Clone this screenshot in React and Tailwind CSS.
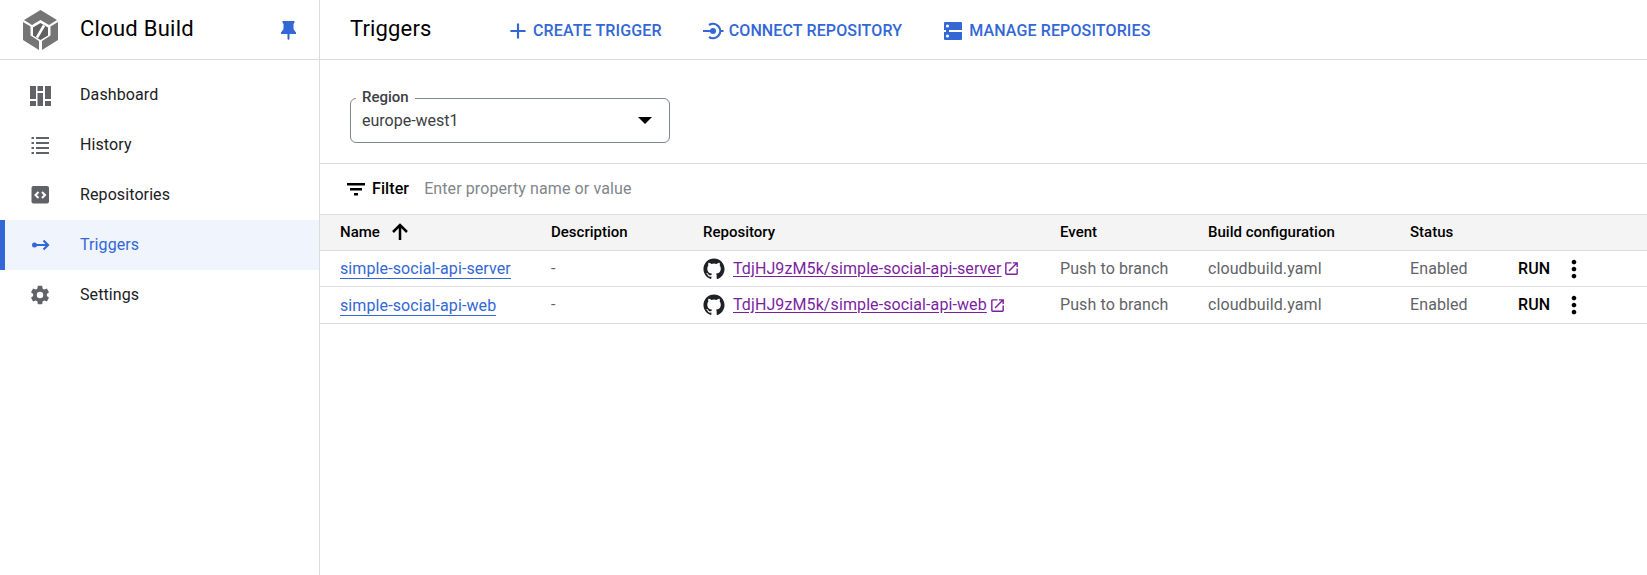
import React from "react";

const Ic = ({ d, className = "", size = 24, fill = "currentColor" }) => (
  <svg width={size} height={size} viewBox="0 0 24 24" fill={fill} className={`shrink-0 ${className}`}>
    <path d={d} />
  </svg>
);

const GH = "M12 .5C5.65.5.5 5.65.5 12c0 5.08 3.29 9.39 7.86 10.91.58.11.79-.25.79-.55v-2.14c-3.2.7-3.87-1.36-3.87-1.36-.52-1.33-1.28-1.68-1.28-1.68-1.04-.71.08-.7.08-.7 1.15.08 1.76 1.19 1.76 1.19 1.03 1.76 2.69 1.25 3.35.96.1-.75.4-1.25.73-1.54-2.55-.29-5.24-1.28-5.24-5.69 0-1.26.45-2.28 1.19-3.09-.12-.29-.52-1.46.11-3.05 0 0 .97-.31 3.17 1.18a11 11 0 0 1 5.77 0c2.2-1.49 3.17-1.18 3.17-1.18.63 1.59.23 2.76.11 3.05.74.81 1.19 1.83 1.19 3.09 0 4.42-2.69 5.39-5.26 5.68.41.36.78 1.06.78 2.14v3.17c0 .31.21.67.8.55C20.22 21.38 23.5 17.08 23.5 12 23.5 5.65 18.35.5 12 .5z";
const EXT = "M19 19H5V5h7V3H5a2 2 0 0 0-2 2v14a2 2 0 0 0 2 2h14a2 2 0 0 0 2-2v-7h-2v7zM14 3v2h3.59l-9.83 9.83 1.41 1.41L19 6.41V10h2V3h-7z";
const MORE = "M12 8c1.1 0 2-.9 2-2s-.9-2-2-2-2 .9-2 2 .9 2 2 2zm0 2c-1.1 0-2 .9-2 2s.9 2 2 2 2-.9 2-2-.9-2-2-2zm0 6c-1.1 0-2 .9-2 2s.9 2 2 2 2-.9 2-2-.9-2-2-2z";

const nav = [
  { label: "Dashboard", icon: <svg width="24" height="24" viewBox="0 0 24 24" fill="#5f6368" className="shrink-0"><path d="M2 3h6v13H2zM2 18h6v5H2zM9.500 3h5.500v5H9.500zM9.500 10h5.500v13H9.500zM17 3h6v13h-6zM17 18h6v5h-6z" /></svg> },
  { label: "History", icon: <svg width="24" height="24" viewBox="0 0 24 24" fill="#5f6368" className="shrink-0"><path d="M3.500 4h2.500v2H3.500zM8 4h13v2H8zM3.500 9h2.500v2H3.500zM8 9h13v2H8zM3.500 14h2.500v2H3.500zM8 14h13v2H8zM3.500 19h2.500v2H3.500zM8 19h13v2H8z" /></svg> },
  { label: "Repositories", icon: <svg width="24" height="24" viewBox="0 0 24 24" className="shrink-0"><rect x="3.500" y="3" width="17.500" height="17.500" rx="2" fill="#5f6368" /><path d="M10.500 9l-3 3 3 3M14 9l3 3-3 3" fill="none" stroke="#fff" strokeWidth="2" /></svg> },
  { label: "Triggers", active: true, icon: <svg width="24" height="24" viewBox="0 0 24 24" className="shrink-0"><circle cx="6.500" cy="12" r="2.500" fill="#3367d6" /><path d="M6.500 12H20M15.500 7.500 20 12l-4.500 4.500" fill="none" stroke="#3367d6" strokeWidth="2.200" /></svg> },
  { label: "Settings", icon: <Ic size={22} className="text-[#5f6368] mx-[1px]" d="M19.43 12.98c.04-.32.07-.64.07-.98s-.03-.66-.07-.98l2.11-1.65c.19-.15.24-.42.12-.64l-2-3.46c-.12-.22-.39-.3-.61-.22l-2.49 1c-.52-.4-1.08-.73-1.69-.98l-.38-2.65A.49.49 0 0 0 14 2h-4c-.25 0-.46.18-.49.42l-.38 2.65c-.61.25-1.17.59-1.69.98l-2.49-1c-.23-.09-.49 0-.61.22l-2 3.46c-.13.22-.07.49.12.64l2.11 1.65c-.04.32-.07.65-.07.98s.03.66.07.98l-2.11 1.65c-.19.15-.24.42-.12.64l2 3.46c.12.22.39.3.61.22l2.49-1c.52.4 1.08.73 1.69.98l.38 2.65c.03.24.24.42.49.42h4c.25 0 .46-.18.49-.42l.38-2.65c.61-.25 1.17-.59 1.69-.98l2.49 1c.23.09.49 0 .61-.22l2-3.46c.12-.22.07-.49-.12-.64l-2.11-1.65zM12 15.5a3.5 3.5 0 1 1 0-7 3.5 3.5 0 0 1 0 7z" /> },
];

const cols = "grid grid-cols-[211px_152px_357px_148px_202px_108px_1fr] items-center pl-5";

const Row = ({ name, repo, h }) => (
  <div className={`${cols} ${h} border-b border-[#dadce0] text-[16px] tracking-[0.1px] text-[#5f6368]`}>
    <a className="text-[#3367d6] border-b border-[#3367d6] justify-self-start leading-[19px] mt-[1px]">{name}</a>
    <span>-</span>
    <div className="flex items-center">
      <Ic d={GH} size={22} className="text-[#202124]" />
      <a className="ml-[8px] text-[#7b1fa2] underline underline-offset-2">{repo}</a>
      <Ic d={EXT} size={17} className="ml-[2px] text-[#7b1fa2]" />
    </div>
    <span>Push to branch</span>
    <span>cloudbuild.yaml</span>
    <span>Enabled</span>
    <div className="flex items-center">
      <span className="text-black font-medium text-[16px]">RUN</span>
      <Ic d={MORE} size={28} className="text-black ml-[10px]" />
    </div>
  </div>
);

export default function App() {
  return (
    <div className="flex h-[575px] w-[1647px] overflow-hidden bg-white text-[14px] text-[#202124] font-['Roboto',sans-serif]">
      <aside className="w-[320px] shrink-0 border-r border-[#dadce0]">
        <div className="flex h-[60px] items-center border-b border-[#dadce0] pl-[23px] pr-[23px]">
          <svg width="35" height="40" viewBox="0 0 35 40" className="shrink-0">
            <path d="M17.500 0 34 10l-8 5-8.500-5L9 15l-8-5z" fill="#757575" />
            <path d="M0 12l7.500 4.500v9L16 31v9L0 30z" fill="#757575" />
            <path d="M35 12l-7.500 4.500v9L19 31v9l16-10z" fill="#757575" />
            <path d="M17.500 13 25 17.500v8L17.500 30 10 25.500v-8z" fill="#616161" />
            <path d="M21 15.500 14 27.500" stroke="#fff" strokeWidth="2.500" fill="none" />
          </svg>
          <span className="ml-[22px] mb-[2px] flex-1 text-[22px] tracking-[0.25px] text-[#000] leading-none">Cloud Build</span>
          <svg width="15" height="20" viewBox="0 0 15 20" fill="#3367d6" className="shrink-0">
            <path d="M1.500 1h12v1.500L12.500 4v5l2.500 3.500V14H8.500v5L7.500 20l-1-1v-5H0v-1.500L2.500 9V4l-1-1.500z" />
          </svg>
        </div>
        <nav className="pt-[10px]">
          {nav.map((n) => (
            <div key={n.label} className={`flex h-[50px] items-center text-[16px] tracking-[0.1px] ${n.active ? "bg-[#f0f4fd] text-[#3367d6] border-l-[5px] border-[#3367d6] pl-[23px]" : "text-[#202124] pl-[28px]"}`}>
              {n.icon}
              <span className="ml-[28px]">{n.label}</span>
            </div>
          ))}
        </nav>
      </aside>
      <main className="flex-1 min-w-0">
        <header className="flex h-[60px] items-center border-b border-[#dadce0] pl-[30px] font-medium text-[#3367d6] text-[16px] tracking-[0.13px]">
          <h1 className="w-[155px] mb-[2px] text-[22px] font-normal tracking-[0.15px] text-black">Triggers</h1>
          <div className="flex items-center mt-[3px]">
            <Ic size={26} d="M19 13h-6v6h-2v-6H5v-2h6V5h2v6h6v2z" />
            <span className="ml-[2px]">CREATE TRIGGER</span>
          </div>
          <div className="flex items-center ml-[40px] mt-[3px]">
            <svg width="22" height="22" viewBox="0 0 22 22" fill="none" stroke="#3367d6" strokeWidth="2.200" className="shrink-0"><circle cx="11" cy="11" r="3" fill="#3367d6" stroke="none" /><path d="M1 11h8M7 5A7.200 7.200 0 1 1 7 17M18 11h3.500" /></svg>
            <span className="ml-[5px]">CONNECT REPOSITORY</span>
          </div>
          <div className="flex items-center ml-[42px] mt-[3px]">
            <svg width="18" height="18" viewBox="0 0 18 18" fill="#3367d6" className="shrink-0"><path d="M0 1a1 1 0 0 1 1-1h16a1 1 0 0 1 1 1v7H0zM2 8h3v2H2zM0 10h18v7a1 1 0 0 1-1 1H1a1 1 0 0 1-1-1z" /><circle cx="3.500" cy="4" r="1.600" fill="#fff" /><circle cx="3.500" cy="14" r="1.600" fill="#fff" /></svg>
            <span className="ml-[7px]">MANAGE REPOSITORIES</span>
          </div>
        </header>
        <section className="h-[103px] pl-[30px] pt-[38px]">
          <div className="relative flex h-[45px] w-[320px] items-center justify-between rounded-[6px] border border-[#80868b] pl-[11px] pr-[17px] text-[16px]">
            <span className="absolute left-[5px] top-[-10px] bg-white px-[6px] text-[15px] font-medium leading-[16px] text-[#3c4043]">Region</span>
            <span className="text-[#3c4043]">europe-west1</span>
            <span className="h-0 w-0 border-x-[7px] border-t-[7px] border-x-transparent border-t-black" />
          </div>
        </section>
        <div className="flex h-[51px] items-center border-t border-[#dadce0] pl-[24px] text-[16px] tracking-[0.1px]">
          <Ic size={24} d="M3 6h18v2.400H3zM6 11h12v2.400H6zM10 16h4v2.400h-4z" className="text-black" />
          <span className="ml-[4px] font-medium text-black">Filter</span>
          <span className="ml-[15px] text-[#80868b]">Enter property name or value</span>
        </div>
        <div>
          <div className={`${cols} h-[37px] border-y border-[#dadce0] bg-[#f4f4f4] pb-[1px] font-medium text-black text-[15px]`}>
            <div className="flex items-center">
              <span>Name</span>
              <svg width="24" height="24" viewBox="0 0 24 24" fill="none" stroke="currentColor" strokeWidth="2.500" className="ml-[8px] shrink-0"><path d="M12 20V5M5 12l7-7 7 7" /></svg>
            </div>
            <span>Description</span>
            <span>Repository</span>
            <span>Event</span>
            <span>Build configuration</span>
            <span>Status</span>
          </div>
          <Row name="simple-social-api-server" repo="TdjHJ9zM5k/simple-social-api-server" h="h-[36px]" />
          <Row name="simple-social-api-web" repo="TdjHJ9zM5k/simple-social-api-web" h="h-[37px]" />
        </div>
      </main>
    </div>
  );
}
